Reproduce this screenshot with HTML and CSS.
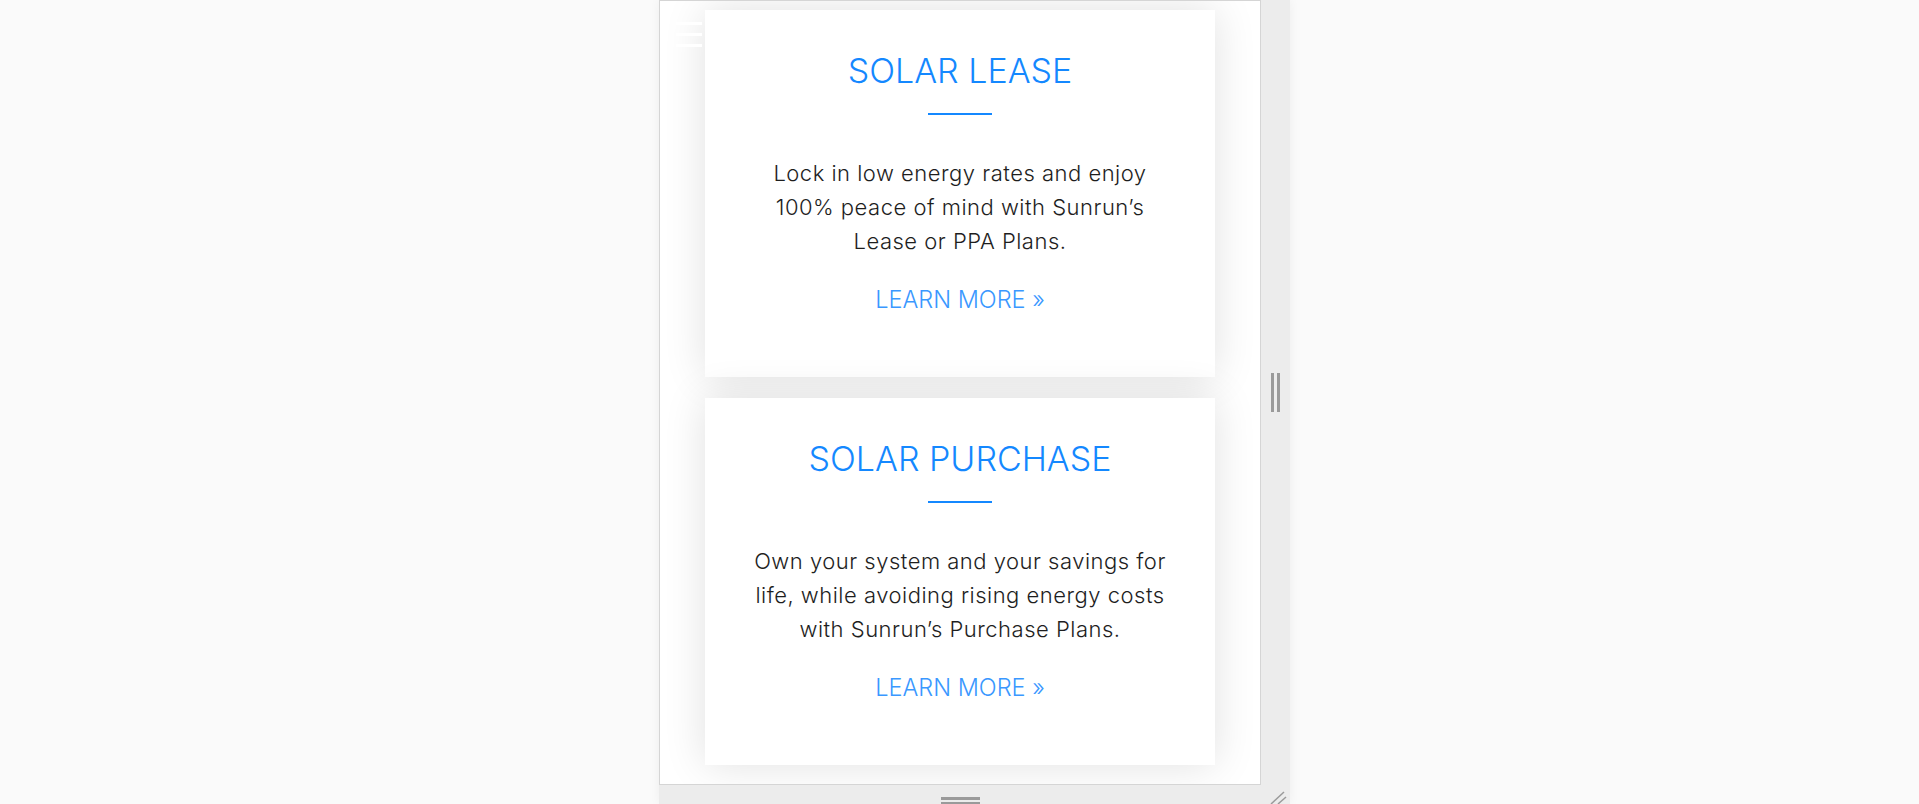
FILE: index.html
```html
<!DOCTYPE html>
<html lang="en">
<head>
<meta charset="utf-8">
<title>Sunrun plans preview</title>
<link rel="stylesheet" href="styles.css">
</head>
<body>
<div class="stage">
  <div class="frame">
    <div class="hamburger"><span></span><span></span><span></span></div>
    <div class="cards">
      <section class="card">
        <h2 class="card-title">SOLAR LEASE</h2>
        <div class="rule"></div>
        <p class="card-text">Lock in low energy rates and enjoy 100% peace of mind with Sunrun’s Lease or PPA Plans.</p>
        <a class="card-link" href="#">LEARN MORE »</a>
      </section>
      <section class="card">
        <h2 class="card-title">SOLAR PURCHASE</h2>
        <div class="rule"></div>
        <p class="card-text">Own your system and your savings for life, while avoiding rising energy costs with Sunrun’s Purchase Plans.</p>
        <a class="card-link" href="#">LEARN MORE »</a>
      </section>
    </div>
  </div>
  <div class="side-handle"><span></span><span></span></div>
  <div class="bottom-handle"><span></span><span></span></div>
  <div class="corner">
    <svg width="29" height="19" viewBox="0 0 29 19"><line x1="10" y1="19" x2="23" y2="7" stroke="#9a9a9a" stroke-width="1.5"/><line x1="17" y1="19" x2="25" y2="12" stroke="#9a9a9a" stroke-width="1.5"/></svg>
  </div>
</div>
</body>
</html>
```

FILE: styles.css
```css
html, body {
  margin: 0;
  padding: 0;
}
body {
  background: #fafafa;
  height: 804px;
  overflow: hidden;
  font-family: Inter, Roboto, "Liberation Sans", sans-serif;
}
.stage {
  display: grid;
  grid-template-columns: 602px 29px;
  grid-template-rows: 785px 19px;
  width: 631px;
  margin-left: calc(50% - 300.5px);
  box-shadow: 0 0 10px rgba(0,0,0,0.05);
}
.frame {
  grid-column: 1;
  grid-row: 1;
  border: 1px solid #d5d5d5;
  background: #fff;
  overflow: hidden;
  position: relative;
}
.hamburger {
  position: absolute;
  left: 16px;
  top: 21px;
  z-index: 2;
  display: flex;
  flex-direction: column;
  gap: 8px;
}
.hamburger span {
  display: block;
  width: 26px;
  height: 3px;
  background: #fff;
}
.cards {
  padding: 9px 45px 0;
  display: flex;
  flex-direction: column;
  gap: 21px;
}
.card {
  background: #fff;
  height: 367px;
  box-sizing: border-box;
  padding: 41px 45px 0;
  box-shadow: 0 0 40px rgba(0,0,0,0.12);
  text-align: center;
  display: flex;
  flex-direction: column;
  align-items: center;
}
.card-title {
  margin: 0;
  font-size: 34px;
  line-height: 40px;
  font-weight: 300;
  color: #1488ff;
}
.rule {
  width: 64px;
  height: 2px;
  background: #1488ff;
  margin-top: 22px;
}
.card-text {
  margin: 41px 0 0;
  font-size: 22px;
  line-height: 34px;
  font-weight: 300;
  letter-spacing: 0.5px;
  color: #1e1e1e;
}
.card-link {
  margin-top: 27px;
  font-size: 23.5px;
  line-height: 30px;
  font-weight: 300;
  color: #3a98ff;
  text-decoration: none;
}
.side-handle {
  grid-column: 2;
  grid-row: 1;
  background: #ececec;
  display: flex;
  align-items: center;
  justify-content: center;
  gap: 3px;
}
.side-handle span {
  display: block;
  width: 3px;
  height: 39px;
  background: #9a9a9a;
}
.bottom-handle {
  grid-column: 1;
  grid-row: 2;
  background: #ececec;
  display: flex;
  flex-direction: column;
  align-items: center;
  padding-top: 12px;
  gap: 2px;
  box-sizing: border-box;
}
.bottom-handle span {
  display: block;
  width: 39px;
  height: 3px;
  flex: none;
  background: #9a9a9a;
}
.corner {
  grid-column: 2;
  grid-row: 2;
  background: #ececec;
}
.corner svg {
  display: block;
}
```
